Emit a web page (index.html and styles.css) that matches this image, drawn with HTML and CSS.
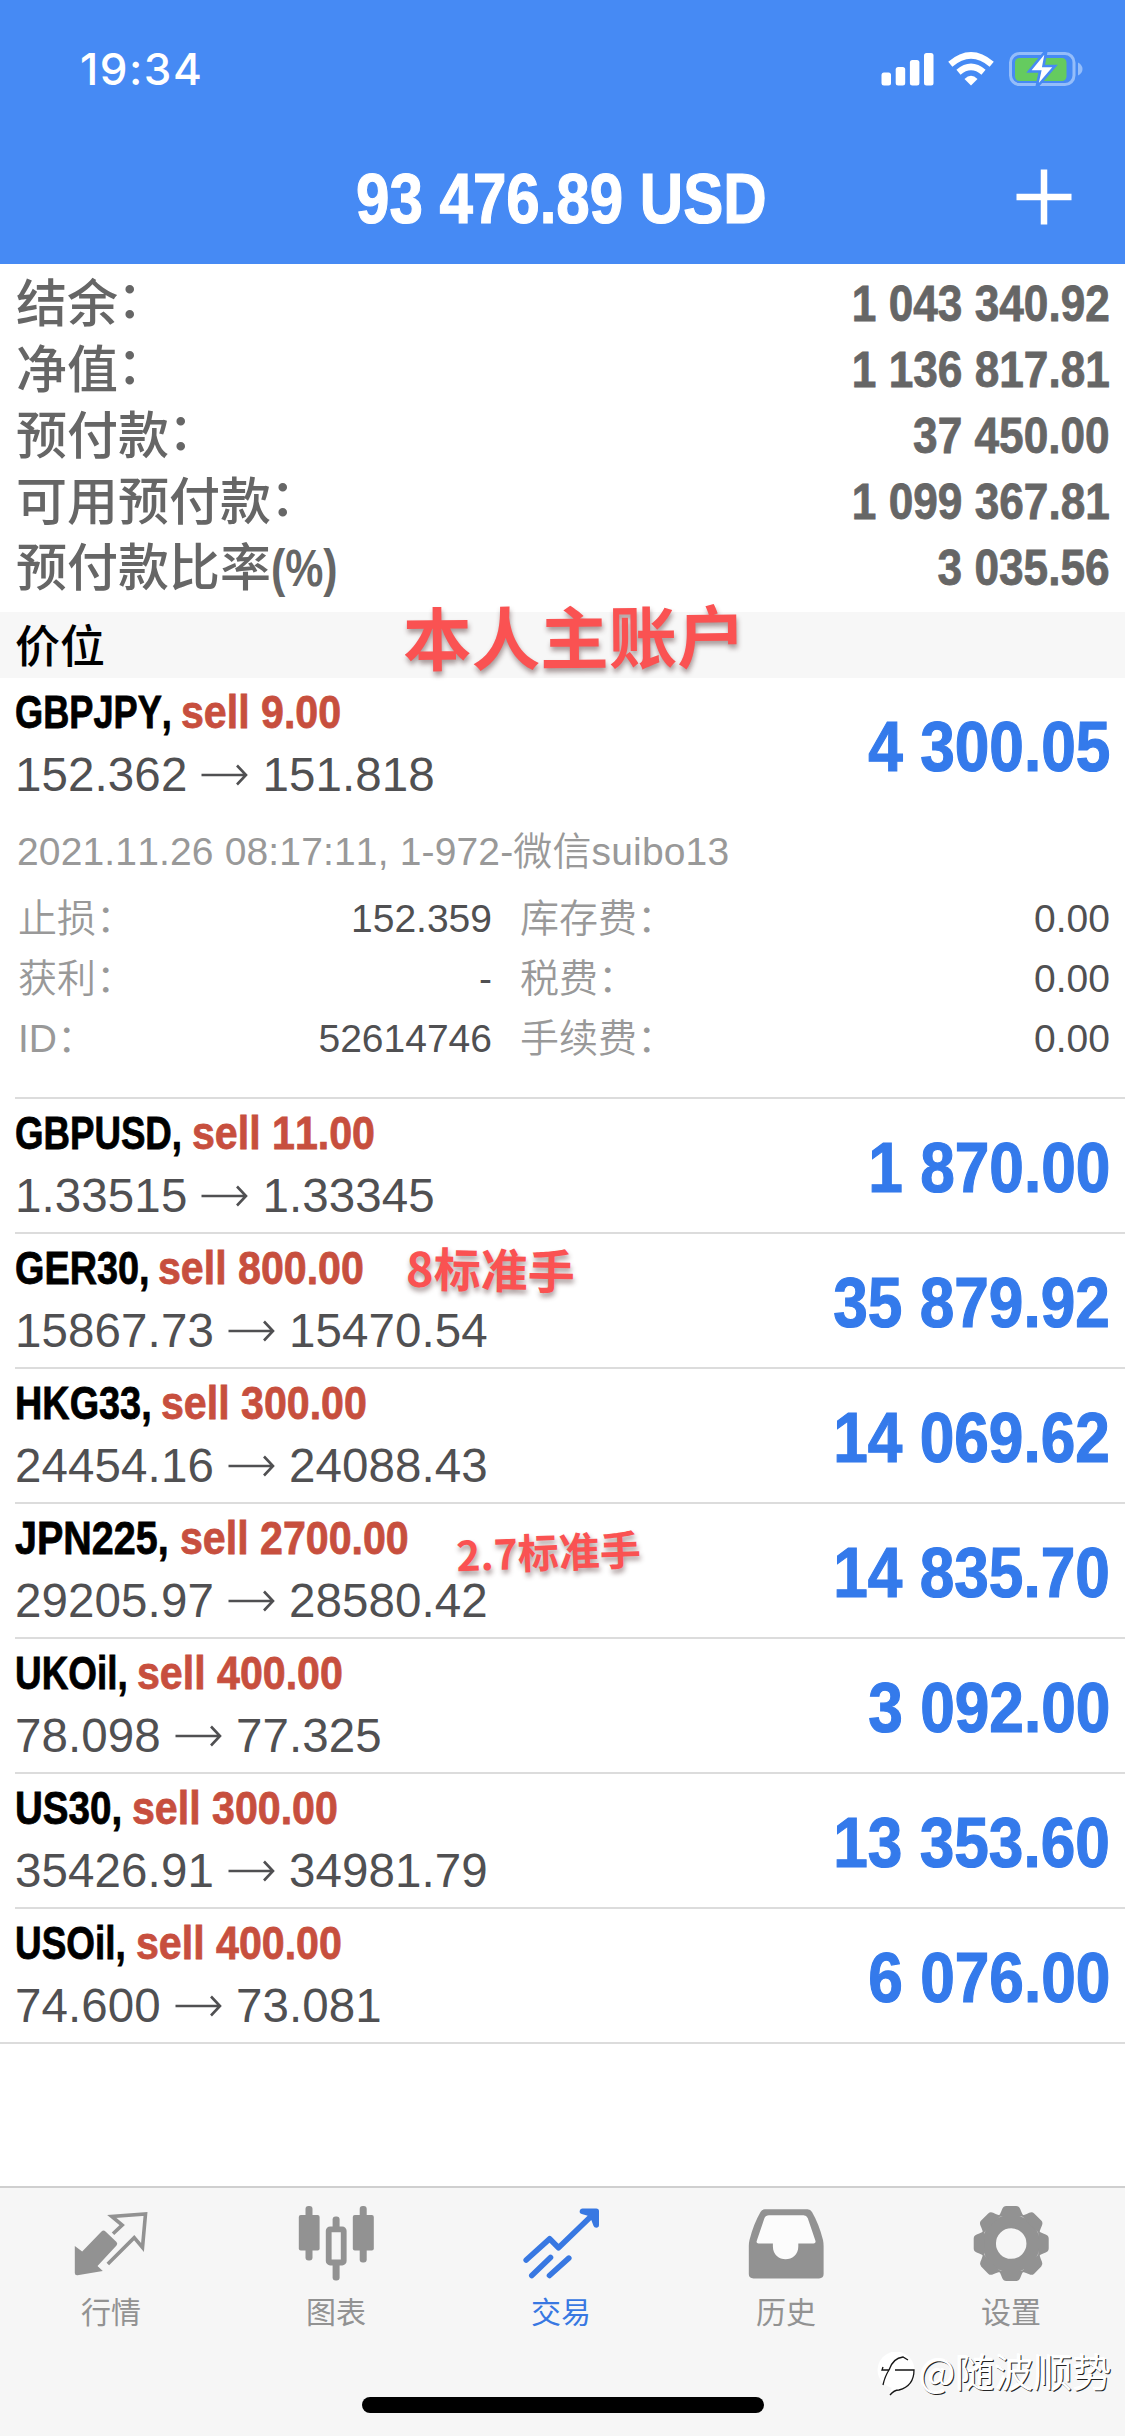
FILE: index.html
```html
<!DOCTYPE html>
<html lang="zh-CN">
<head>
<meta charset="utf-8">
<title>交易</title>
<link rel="stylesheet" href="styles.css">
</head>
<body>
<svg width="0" height="0" class="defs">
  <symbol id="arrow" viewBox="0 0 46 24"><path d="M0 12H44M35.500 2.500L44.500 12L35.500 21.500" fill="none" stroke="currentColor" stroke-width="2.600"/></symbol>
</svg>
<header class="header">
  <div class="status">
    <span class="clock">19:34</span>
    <svg class="status-icons" width="206" height="38" viewBox="880 50 206 38">
      <g fill="#fff">
        <rect x="881.500" y="72.500" width="9.500" height="13" rx="2.500"/>
        <rect x="895.700" y="67" width="9.500" height="18.500" rx="2.500"/>
        <rect x="909.900" y="60" width="9.500" height="25.500" rx="2.500"/>
        <rect x="924" y="53" width="9.500" height="32.500" rx="2.500"/>
        <path d="M971 85.500L964.500 79Q971 72.500 977.500 79Z"/>
      </g>
      <g fill="none" stroke="#fff" stroke-width="6.400">
        <path d="M950.300 64.200Q971 46.500 991.700 64.200"/>
        <path d="M958.500 72.200Q971 61.500 983.500 72.200"/>
      </g>
      <rect x="1010.500" y="53.500" width="63.500" height="31" rx="9" fill="none" stroke="#94bdfa" stroke-width="3"/>
      <path d="M1078 62.500Q1082.500 65 1082.500 69T1078 75.500Z" fill="#94bdfa"/>
      <rect x="1015" y="58" width="51.500" height="23" rx="4.500" fill="#65cb5f"/>
      <path d="M1046.500 50L1029 71.500H1040L1036.500 87.500L1055 66H1043.500Z" fill="#fff" stroke="#468af4" stroke-width="2.600"/>
    </svg>
  </div>
  <div class="nav">
    <h1 class="balance">93 476.89 USD</h1>
    <svg class="add" width="56" height="56" viewBox="0 0 56 56"><path d="M28 0.500V55.500M0.500 28H55.500" stroke="#fff" stroke-width="6.500"/></svg>
  </div>
</header>

<dl class="summary">
  <div class="sum-row"><dt>结余<span class="colon">：</span></dt><dd>1 043 340.92</dd></div>
  <div class="sum-row"><dt>净值<span class="colon">：</span></dt><dd>1 136 817.81</dd></div>
  <div class="sum-row"><dt>预付款<span class="colon">：</span></dt><dd>37 450.00</dd></div>
  <div class="sum-row"><dt>可用预付款<span class="colon">：</span></dt><dd>1 099 367.81</dd></div>
  <div class="sum-row"><dt>预付款比率<span class="pct">(%)</span></dt><dd>3 035.56</dd></div>
</dl>

<div class="section">价位<span class="note note-main">本人主账户</span></div>

<main class="positions">
  <section class="pos">
    <div class="pos-head">
      <div>
        <div class="title"><b class="sym" style="--w:166px;--s:.77"><i>GBPJPY,</i></b><b class="vol">sell 9.00</b></div>
        <div class="price">152.362<svg><use href="#arrow"/></svg>151.818</div>
      </div>
      <div class="amount">4 300.05</div>
    </div>
    <div class="opened">2021.11.26 08:17:11, 1-972-微信suibo13</div>
    <div class="details">
      <span>止损：</span><b>152.359</b><span>库存费：</span><b>0.00</b>
      <span>获利：</span><b>-</b><span>税费：</span><b>0.00</b>
      <span>ID：</span><b>52614746</b><span>手续费：</span><b>0.00</b>
    </div>
  </section>
  <section class="pos"><div class="pos-head"><div>
    <div class="title"><b class="sym" style="--w:177px;--s:.78"><i>GBPUSD,</i></b><b class="vol">sell 11.00</b></div>
    <div class="price">1.33515<svg><use href="#arrow"/></svg>1.33345</div></div>
    <div class="amount">1 870.00</div></div></section>
  <section class="pos"><div class="pos-head"><div>
    <div class="title"><b class="sym" style="--w:143px;--s:.805"><i>GER30,</i></b><b class="vol">sell 800.00</b></div>
    <div class="price">15867.73<svg><use href="#arrow"/></svg>15470.54</div></div>
    <div class="amount">35 879.92</div></div><span class="note note-ger">8标准手</span></section>
  <section class="pos"><div class="pos-head"><div>
    <div class="title"><b class="sym" style="--w:146px;--s:.805"><i>HKG33,</i></b><b class="vol">sell 300.00</b></div>
    <div class="price">24454.16<svg><use href="#arrow"/></svg>24088.43</div></div>
    <div class="amount">14 069.62</div></div></section>
  <section class="pos"><div class="pos-head"><div>
    <div class="title"><b class="sym" style="--w:165px;--s:.84"><i>JPN225,</i></b><b class="vol">sell 2700.00</b></div>
    <div class="price">29205.97<svg><use href="#arrow"/></svg>28580.42</div></div>
    <div class="amount">14 835.70</div></div><span class="note note-jpn">2.7标准手</span></section>
  <section class="pos"><div class="pos-head"><div>
    <div class="title"><b class="sym" style="--w:122px;--s:.785"><i>UKOil,</i></b><b class="vol">sell 400.00</b></div>
    <div class="price">78.098<svg><use href="#arrow"/></svg>77.325</div></div>
    <div class="amount">3 092.00</div></div></section>
  <section class="pos"><div class="pos-head"><div>
    <div class="title"><b class="sym" style="--w:117px;--s:.82"><i>US30,</i></b><b class="vol">sell 300.00</b></div>
    <div class="price">35426.91<svg><use href="#arrow"/></svg>34981.79</div></div>
    <div class="amount">13 353.60</div></div></section>
  <section class="pos"><div class="pos-head"><div>
    <div class="title"><b class="sym" style="--w:121px;--s:.785"><i>USOil,</i></b><b class="vol">sell 400.00</b></div>
    <div class="price">74.600<svg><use href="#arrow"/></svg>73.081</div></div>
    <div class="amount">6 076.00</div></div></section>
</main>

<footer class="footer">
  <nav class="tabs">
    <div class="tab">
      <svg viewBox="0 0 80 82">
        <path d="M2.800 46L10.200 51.500L29.500 31.500Q31.500 29.500 33.500 31.500L44.500 42Q46 43.500 44.500 45.500L25.500 66L30.800 71L5.500 75.300Q2.800 75.500 2.800 73Z" fill="currentColor"/>
        <path d="M41 33.800L50.200 25L39.800 16.500L73.500 14L70.500 47.500L62.200 37.700L35.800 64" fill="none" stroke="currentColor" stroke-width="3.600"/>
      </svg>行情</div>
    <div class="tab">
      <svg viewBox="0 0 80 82" fill="currentColor">
        <rect x="1.800" y="15" width="20.800" height="35.500" rx="2"/><rect x="8.500" y="6" width="7" height="54.500" rx="3"/>
        <rect x="55.800" y="15" width="21" height="35.500" rx="2"/><rect x="62.700" y="6" width="7" height="56.500" rx="3"/>
        <rect x="35.600" y="16.500" width="7" height="14" rx="3"/><rect x="35.600" y="60" width="7" height="20.500" rx="3"/>
        <rect x="31.700" y="29.300" width="15" height="33.200" rx="1.500" fill="none" stroke="currentColor" stroke-width="5.800"/>
      </svg>图表</div>
    <div class="tab active">
      <svg viewBox="0 0 80 82" fill="none" stroke="currentColor" stroke-width="5.600" stroke-linecap="round" stroke-linejoin="round">
        <path d="M4.200 60L27.600 38.800L36.500 47.800L72 13.500M60.500 11.300H74.200V25L70 14ZM9.800 75.500L28.500 57.500M27.500 75.500L46.800 58.200"/>
      </svg>交易</div>
    <div class="tab">
      <svg viewBox="0 0 80 82">
        <path d="M18 9.300H60.500Q63.500 9.300 65 12Q72 24 76 40Q76.600 43 76.600 46V74Q76.600 78.400 72 78.400H6.500Q1.800 78.400 1.800 74V46Q1.800 43 2.500 40Q6.500 24 13.500 12Q15 9.300 18 9.300Z" fill="currentColor"/>
        <path d="M22 15.200H56.500Q59.500 15.200 60.700 18L68.500 41Q69 43.400 66.500 43.400H51.300V46.500C51.300 63.500 25.900 63.500 25.900 46.500V43.400H11.500Q9 43.400 9.700 41L17.500 18Q18.800 15.200 22 15.200Z" fill="#fcfcfc"/>
      </svg>历史</div>
    <div class="tab">
      <svg viewBox="0 0 80 82">
        <defs><path id="tooth" d="M-13 -27Q-11 -29 -10 -32L-9 -34.500Q-7.800 -37.500 -5 -37.500H5Q7.800 -37.500 9 -34.500L10 -32Q11 -29 13 -27Z"/></defs>
        <g transform="translate(39.200 43.600)" fill="currentColor">
          <circle r="22" fill="none" stroke="currentColor" stroke-width="13.500"/>
          <use href="#tooth"/><use href="#tooth" transform="rotate(45)"/><use href="#tooth" transform="rotate(90)"/><use href="#tooth" transform="rotate(135)"/>
          <use href="#tooth" transform="rotate(180)"/><use href="#tooth" transform="rotate(225)"/><use href="#tooth" transform="rotate(270)"/><use href="#tooth" transform="rotate(315)"/>
        </g>
      </svg>设置</div>
  </nav>
  <div class="home-bar"></div>
  <div class="watermark">
    <svg width="42" height="46" viewBox="0 0 42 46">
      <circle cx="19" cy="18" r="18.500" fill="#fff"/><path d="M13 43Q14 36 17 30L34 27Q28 36 20 38Z" fill="#fff"/>
      <path d="M6 33Q8 24 12 18H5L6 15M12 18Q16 6 26 5L31 8M18 18H37Q37 34 22 38Q17 38 13 43" fill="none" stroke="#151515" stroke-width="1.300"/>
    </svg><span>@随波顺势</span>
  </div>
</footer>
</body>
</html>
```
FILE: styles.css
```css
* { box-sizing: border-box; margin: 0; padding: 0; }

body {
  position: relative;
  display: flex;
  flex-direction: column;
  width: 1125px;
  height: 2436px;
  overflow: hidden;
  background: #fff;
  font-family: "Liberation Sans", "Noto Sans CJK SC", sans-serif;
  font-kerning: none;
}

i { font-style: normal; }
.defs { position: absolute; }

/* Header */
.header { height: 264px; flex: none; background: #468af4; color: #fff; }
.status {
  display: flex;
  align-items: center;
  justify-content: space-between;
  height: 138px;
  padding: 0 39px 0 80px;
}
.clock { font: 500 44px/60px Inter, sans-serif; letter-spacing: 1.5px; }
.nav {
  display: grid;
  grid-template-columns: 1fr auto 1fr;
  align-items: center;
  height: 122px;
  padding-right: 53px;
}
.balance {
  grid-column: 2;
  margin-left: 50px;
  font-size: 70px;
  line-height: 80px;
  white-space: nowrap;
  -webkit-text-stroke: 1.2px;
  transform: scaleX(.858);
}
.add { justify-self: end; margin-top: -4px; }

/* Account summary */
.summary { height: 348px; padding: 6px 15px 0 16px; color: #666; }
.sum-row { display: flex; justify-content: space-between; height: 66px; }
.sum-row dt {
  font-size: 51px;
  font-weight: 500;
  line-height: 69px;
}
.colon { margin-left: -1px; line-height: 0; vertical-align: 4px; }
.sum-row dd {
  font-size: 50.5px;
  font-weight: 700;
  line-height: 67px;
  -webkit-text-stroke: .8px;
  transform: scaleX(.875);
  transform-origin: right;
}
.pct {
  display: inline-block;
  font-size: 51px;
  font-weight: 700;
  line-height: 50px;
  transform: scaleX(.84);
  transform-origin: left;
}

.section {
  position: relative;
  height: 66px;
  padding-left: 15px;
  background: #f7f7f7;
  font: 500 45px/63px "Noto Sans CJK SC", sans-serif;
}

/* Positions */
.pos { position: relative; }
.pos::after {
  content: "";
  display: block;
  height: 2px;
  margin-left: 15px;
  background: #dcdcdc;
}
.pos:last-child::after { margin-left: 0; }
.pos-head {
  display: flex;
  align-items: flex-start;
  justify-content: space-between;
  height: 133px;
  padding: 5px 15px 0 15px;
}
.title { display: flex; height: 57px; font-size: 47px; line-height: 57px; -webkit-text-stroke: .8px; }
.sym { width: var(--w); color: #000; white-space: nowrap; }
.sym i { display: inline-block; transform: scaleX(var(--s)); transform-origin: left; }
.vol { color: #c74f3e; white-space: nowrap; transform: scaleX(.875); transform-origin: left; }
.price {
  display: flex;
  align-items: center;
  font-size: 47.5px;
  line-height: 70px;
  letter-spacing: .1px;
  color: #505052;
}
.price svg { width: 47px; height: 24px; margin: 0 14px; }
.amount {
  margin-top: 24px;
  font-size: 71px;
  font-weight: 700;
  line-height: 80px;
  color: #347aeb;
  -webkit-text-stroke: 1.2px;
  transform: scaleX(.876);
  transform-origin: right;
}
.opened {
  height: 78px;
  padding-left: 17px;
  font-size: 39px;
  font-weight: 350;
  line-height: 81px;
  letter-spacing: .15px;
  color: #999;
}
.details {
  display: grid;
  grid-template-columns: 150px 324px 160px 1fr;
  grid-auto-rows: 60px;
  height: 208px;
  padding: 0 15px 0 18px;
  font-size: 39px;
  font-weight: 350;
  line-height: 60px;
  color: #999;
}
.details span { white-space: nowrap; }
.details b { font-weight: 400; text-align: right; color: #505052; }
.details span:nth-child(4n + 3) { padding-left: 28px; }

/* Annotations laid over the list */
.note {
  position: absolute;
  font-family: "Noto Sans CJK SC", sans-serif;
  font-weight: 700;
  color: #fa5252;
  white-space: nowrap;
  text-shadow: 1px 4px 5px rgba(70, 40, 40, .45);
}
.note-main { left: 403px; top: -14px; font-size: 68.5px; line-height: 74px; transform: rotate(-.5deg); }
.note-ger { left: 406px; top: 6px; font-size: 47px; line-height: 56px; transform: rotate(1deg); }
.note-jpn { left: 456px; top: 18px; font-size: 41px; line-height: 56px; transform: rotate(-2deg); }

/* Bottom bar */
.footer {
  position: relative;
  height: 250px;
  margin-top: auto;
  flex: none;
  border-top: 2px solid #cfcfcf;
  background: #f6f6f6;
}
.tabs { display: grid; grid-template-columns: repeat(5, 1fr); padding-top: 12px; }
.tab {
  display: flex;
  flex-direction: column;
  align-items: center;
  padding-right: 3px;
  font: 400 30px/40px "Noto Sans CJK SC", sans-serif;
  color: #929292;
}
.tab svg { width: 80px; height: 82px; margin: 0 -2px 8px 0; }
.tab.active { color: #3878e2; }
.home-bar { width: 402px; height: 16px; margin: 67px auto 0; border-radius: 8px; background: #000; }
.watermark {
  position: absolute;
  left: 877px;
  top: 164px;
  display: flex;
  font: 350 39px/36px "Noto Sans CJK SC", sans-serif;
  color: #fff;
  text-shadow: 1px 1px 0 #222, -1px -1px 0 #fff;
}
```
